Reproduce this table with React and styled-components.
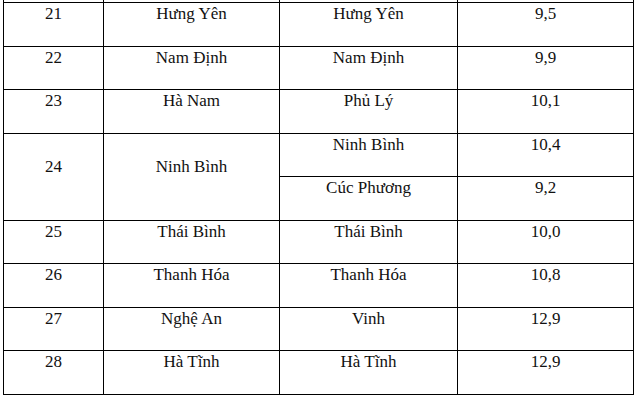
import React from "react";
import styled, { createGlobalStyle } from "styled-components";

const Global = createGlobalStyle`
  html, body { margin: 0; padding: 0; background: #fff; }
  body { font-family: "Liberation Serif", "Times New Roman", serif; color: #111; }
`;

const Page = styled.div`
  padding-left: 3px;
  width: 644px;
  height: 402px;
  overflow: hidden;
  box-sizing: border-box;
`;

const Table = styled.table`
  border-collapse: collapse;
  table-layout: fixed;
  width: 630px;
  font-family: "Liberation Serif", "Times New Roman", serif;
  font-size: 17px;
  color: #111;
`;

const Col = styled.col`
  width: ${(p) => p.$w}px;
`;

const Row = styled.tr`
  height: ${(p) => p.$h}px;
`;

const Cell = styled.td`
  border: 1px solid #000;
  text-align: center;
  vertical-align: middle;
  padding: 0 0 21px;
  line-height: 20px;
  overflow: hidden;
`;

const SpacerCell = styled.td`
  border: 1px solid #000;
  border-top: none;
  padding: 0;
  height: 2px;
  line-height: 0;
`;

const rows = [
  { n: "21", p: "Hưng Yên", s: "Hưng Yên", v: "9,5" },
  { n: "22", p: "Nam Định", s: "Nam Định", v: "9,9" },
  { n: "23", p: "Hà Nam", s: "Phủ Lý", v: "10,1" },
  { n: "24", p: "Ninh Bình", s: "Ninh Bình", v: "10,4", span: true },
  { sub: true, s: "Cúc Phương", v: "9,2" },
  { n: "25", p: "Thái Bình", s: "Thái Bình", v: "10,0" },
  { n: "26", p: "Thanh Hóa", s: "Thanh Hóa", v: "10,8" },
  { n: "27", p: "Nghệ An", s: "Vinh", v: "12,9" },
  { n: "28", p: "Hà Tĩnh", s: "Hà Tĩnh", v: "12,9" },
];

const heights = [44, 43, 44, 43, 44, 43, 44, 43, 44];

export default function App() {
  return (
    <Page>
      <Global />
      <Table>
        <colgroup>
          <Col $w={100} />
          <Col $w={176} />
          <Col $w={178} />
          <Col $w={176} />
        </colgroup>
        <tbody>
          <Row $h={2}>
            <SpacerCell />
            <SpacerCell />
            <SpacerCell />
            <SpacerCell />
          </Row>
          {rows.map((r, i) => (
            <Row key={i} $h={heights[i]}>
              {!r.sub && <Cell rowSpan={r.span ? 2 : 1}>{r.n}</Cell>}
              {!r.sub && <Cell rowSpan={r.span ? 2 : 1}>{r.p}</Cell>}
              <Cell>{r.s}</Cell>
              <Cell>{r.v}</Cell>
            </Row>
          ))}
        </tbody>
      </Table>
    </Page>
  );
}
